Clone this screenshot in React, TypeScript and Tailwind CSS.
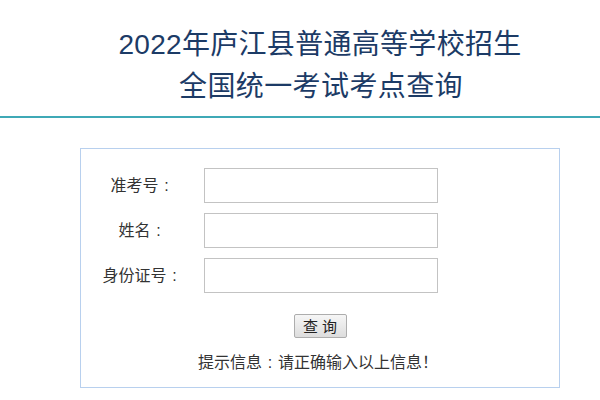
function Colon() {
  return <span className="inline-block w-[16px] text-center">:</span>;
}

export default function App() {
  const rows = [
    { label: "准考号", name: "zkh" },
    { label: "姓名", name: "xm" },
    { label: "身份证号", name: "sfzh" },
  ];

  return (
    <div
      className="w-[600px] h-[400px] bg-white overflow-hidden"
      style={{ fontFamily: '"Liberation Sans", "Noto Sans CJK SC", sans-serif' }}
    >
      {/* header */}
      <div className="pt-[24px] h-[116px] pl-[40px] text-center text-[#1c3b66]">
        <h1 className="text-[28px] leading-[42px] tracking-[0.3px]">2022年庐江县普通高等学校招生</h1>
        <h2 className="text-[28px] leading-[42px] tracking-[0.4px] pl-[2px]">全国统一考试考点查询</h2>
      </div>
      <div className="h-[2px] bg-[#3fa9b6]" />

      {/* query box */}
      <div className="ml-[80px] mt-[30px] w-[480px] h-[240px] border border-[#b8d0ee]">
        <div className="pt-[19px] flex flex-col gap-[10px]">
          {rows.map((r) => (
            <div key={r.name} className="flex items-center h-[35px]">
              <label className="w-[123px] text-center text-[16px] text-[#333]">
                {r.label}
                <Colon />
              </label>
              <input
                name={r.name}
                className="w-[234px] h-[35px] border border-[#c3c3c3] outline-none px-1"
              />
            </div>
          ))}
        </div>
        <div className="mt-[21px] flex justify-center">
          <button className="w-[53px] h-[24px] border border-[#adadad] bg-gradient-to-b from-[#f6f6f6] to-[#dddddd] text-[15px] leading-none text-[#222] rounded-[2px]">
            查 询
          </button>
        </div>
        <p className="mt-[13px] text-center text-[16px] text-[#333] pr-[4px]">
          提示信息<Colon />请正确输入以上信息！
        </p>
      </div>
    </div>
  );
}
